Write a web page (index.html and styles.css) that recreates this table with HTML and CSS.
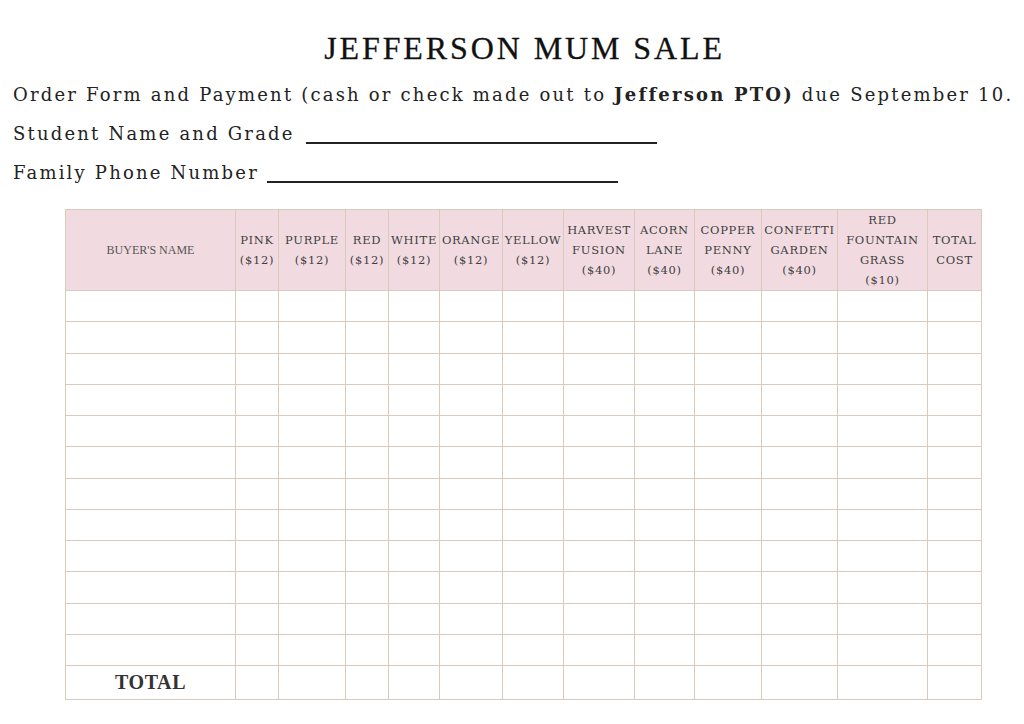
FILE: index.html
```html
<!DOCTYPE html>
<html>
<head>
<meta charset="utf-8">
<link rel="stylesheet" href="styles.css">
</head>
<body>
<div class="page">
  <h1 class="title">JEFFERSON MUM SALE</h1>
  <p class="line">Order Form and Payment (cash or check made out to <b>Jefferson PTO)</b> due September 10.</p>
  <p class="line field">Student Name and Grade <span class="blank blank-student"></span></p>
  <p class="line field">Family Phone Number<span class="blank blank-phone"></span></p>
  <table class="order">
    <colgroup>
      <col style="width:170px"><col style="width:43px"><col style="width:67px"><col style="width:43px"><col style="width:51px"><col style="width:63px"><col style="width:61px"><col style="width:71px"><col style="width:60px"><col style="width:67px"><col style="width:76px"><col style="width:90px"><col style="width:54px">
    </colgroup>
    <thead>
      <tr>
        <th class="buyer">BUYER'S NAME</th>
        <th>PINK<br>($12)</th>
        <th>PURPLE<br>($12)</th>
        <th>RED<br>($12)</th>
        <th>WHITE<br>($12)</th>
        <th>ORANGE<br>($12)</th>
        <th>YELLOW<br>($12)</th>
        <th>HARVEST<br>FUSION<br>($40)</th>
        <th>ACORN<br>LANE<br>($40)</th>
        <th>COPPER<br>PENNY<br>($40)</th>
        <th>CONFETTI<br>GARDEN<br>($40)</th>
        <th>RED<br>FOUNTAIN<br>GRASS<br>($10)</th>
        <th>TOTAL<br>COST</th>
      </tr>
    </thead>
    <tbody>
      <tr><td></td><td></td><td></td><td></td><td></td><td></td><td></td><td></td><td></td><td></td><td></td><td></td><td></td></tr>
      <tr><td></td><td></td><td></td><td></td><td></td><td></td><td></td><td></td><td></td><td></td><td></td><td></td><td></td></tr>
      <tr><td></td><td></td><td></td><td></td><td></td><td></td><td></td><td></td><td></td><td></td><td></td><td></td><td></td></tr>
      <tr><td></td><td></td><td></td><td></td><td></td><td></td><td></td><td></td><td></td><td></td><td></td><td></td><td></td></tr>
      <tr><td></td><td></td><td></td><td></td><td></td><td></td><td></td><td></td><td></td><td></td><td></td><td></td><td></td></tr>
      <tr><td></td><td></td><td></td><td></td><td></td><td></td><td></td><td></td><td></td><td></td><td></td><td></td><td></td></tr>
      <tr><td></td><td></td><td></td><td></td><td></td><td></td><td></td><td></td><td></td><td></td><td></td><td></td><td></td></tr>
      <tr><td></td><td></td><td></td><td></td><td></td><td></td><td></td><td></td><td></td><td></td><td></td><td></td><td></td></tr>
      <tr><td></td><td></td><td></td><td></td><td></td><td></td><td></td><td></td><td></td><td></td><td></td><td></td><td></td></tr>
      <tr><td></td><td></td><td></td><td></td><td></td><td></td><td></td><td></td><td></td><td></td><td></td><td></td><td></td></tr>
      <tr><td></td><td></td><td></td><td></td><td></td><td></td><td></td><td></td><td></td><td></td><td></td><td></td><td></td></tr>
      <tr><td></td><td></td><td></td><td></td><td></td><td></td><td></td><td></td><td></td><td></td><td></td><td></td><td></td></tr>
      <tr class="total"><td class="total-label">TOTAL</td><td></td><td></td><td></td><td></td><td></td><td></td><td></td><td></td><td></td><td></td><td></td><td></td></tr>
    </tbody>
  </table>
</div>
</body>
</html>
```
FILE: styles.css
```css
html, body {
  margin: 0;
  padding: 0;
  background: #ffffff;
}
.page {
  width: 1024px;
  height: 724px;
  padding-top: 28px;
  box-sizing: border-box;
  font-family: "DejaVu Serif", "Liberation Serif", serif;
  color: #222;
}
.title {
  margin: 0 0 7px 0;
  padding-left: 25px;
  text-align: center;
  font-family: "Liberation Serif", serif;
  font-weight: normal;
  font-size: 32px;
  letter-spacing: 2.9px;
  line-height: 40px;
  color: #111;
  -webkit-text-stroke: 0.3px #111;
}
.line {
  margin: 0;
  padding-left: 13px;
  font-size: 18px;
  letter-spacing: 2.2px;
  line-height: 39px;
  color: #222;
  white-space: nowrap;
}
.line b {
  font-weight: bold;
}
.blank {
  display: inline-block;
  width: 351px;
  height: 0;
  border-bottom: 2px solid #222;
  vertical-align: -4px;
}
.blank-student {
  margin-left: 3px;
}
.blank-phone {
  margin-left: 8px;
}
.order {
  margin: 17px 0 0 65px;
  width: 916px;
  table-layout: fixed;
  border-collapse: collapse;
  border: 1px solid #d8cabd;
}
.order th, .order td {
  border: 1px solid #d8cabd;
  padding: 0;
}
.order thead th {
  height: 79px;
  background: #f1dbe1;
  font-weight: normal;
  font-size: 11.5px;
  letter-spacing: 0.7px;
  line-height: 20px;
  color: #3f3f3f;
  text-align: center;
  vertical-align: middle;
  white-space: nowrap;
}
.order thead th.buyer {
  font-family: "Liberation Serif", serif;
  font-size: 12px;
  letter-spacing: 0;
  color: #555;
}
.order tbody td {
  height: 30.25px;
}
.order tbody tr.total td {
  height: 33px;
}
.total-label {
  text-align: center;
  font-family: "Liberation Serif", serif;
  font-weight: bold;
  font-size: 20px;
  letter-spacing: 0.6px;
  color: #333;
}
```
